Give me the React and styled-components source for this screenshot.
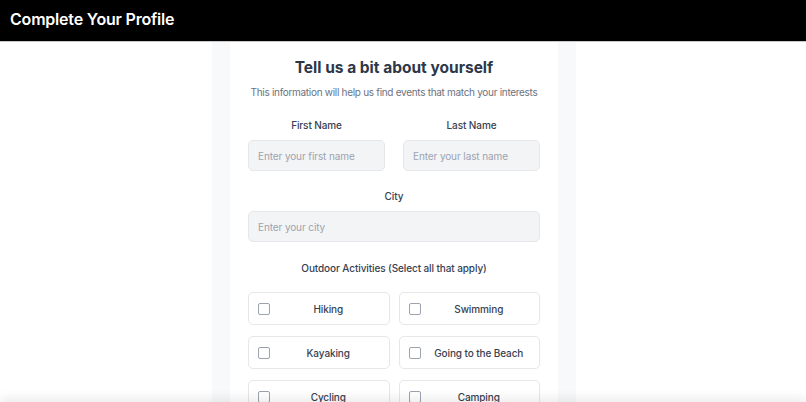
import React from "react";
import styled, { createGlobalStyle } from "styled-components";

const Global = createGlobalStyle`
  * { box-sizing: border-box; }
  html, body { margin: 0; padding: 0; background: #ffffff; }
  body {
    font-family: Inter, "Noto Sans", "Liberation Sans", sans-serif;
    overflow: hidden;
  }
`;

const Header = styled.header`
  height: 42px;
  background: #000000;
  border-bottom: 1px solid #c8c8c8;
  display: flex;
  align-items: center;
  padding: 0 10px;
`;

const HeaderTitle = styled.h1`
  margin: 0 0 3px;
  color: #ffffff;
  font-size: 16px;
  font-weight: 600;
  letter-spacing: -0.2px;
`;

const Main = styled.main`
  display: flex;
  justify-content: center;
  padding-right: 18px;
`;

const Column = styled.div`
  width: 364px;
  background: #f8f9fb;
  padding: 0 18px;
`;

const Card = styled.section`
  background: #ffffff;
  padding: 16px 18px 40px;
  display: flex;
  flex-direction: column;
`;

const Title = styled.h2`
  margin: 0;
  text-align: center;
  font-size: 15.5px;
  font-weight: 700;
  color: #2d3748;
`;

const Subtitle = styled.p`
  margin: 9px 0 0;
  text-align: center;
  font-size: 10px;
  letter-spacing: -0.3px;
  color: #6b7280;
  white-space: nowrap;
`;

const Row = styled.div`
  display: grid;
  grid-template-columns: 1fr 1fr;
  gap: 18px;
  margin-top: ${(p) => p.$top || 0}px;
`;

const Field = styled.div`
  display: flex;
  flex-direction: column;
  margin-top: ${(p) => p.$top || 0}px;
`;

const Label = styled.label`
  text-align: center;
  font-size: 10px;
  font-weight: 500;
  letter-spacing: -0.1px;
  color: #374151;
  margin-bottom: 9px;
`;

const Input = styled.input`
  height: 31px;
  width: 100%;
  border: 1px solid #e5e7eb;
  border-radius: 5px;
  background: #f3f4f6;
  padding: 0 9px;
  font-family: inherit;
  font-size: 10px;
  letter-spacing: -0.1px;
  color: #374151;
  outline: none;
  &::placeholder { color: #9ca3af; }
`;

const SectionLabel = styled.div`
  margin-top: 20px;
  text-align: center;
  font-size: 10px;
  font-weight: 500;
  letter-spacing: -0.1px;
  color: #374151;
`;

const Options = styled.div`
  margin-top: 18px;
  display: grid;
  grid-template-columns: 1fr 1fr;
  column-gap: 9px;
  row-gap: 11px;
`;

const Option = styled.label`
  height: 33px;
  border: 1px solid #e5e7eb;
  border-radius: 5px;
  background: #ffffff;
  display: flex;
  align-items: center;
  padding: 0 10px 0 9px;
  cursor: pointer;
`;

const Box = styled.span`
  width: 12px;
  height: 12px;
  border: 1px solid #9ca3af;
  border-radius: 2px;
  flex-shrink: 0;
`;

const OptionText = styled.span`
  flex: 1;
  margin-left: 8px;
  text-align: center;
  font-size: 10px;
  font-weight: 500;
  letter-spacing: -0.1px;
  color: #374151;
  white-space: nowrap;
`;

const Footer = styled.div`
  position: fixed;
  left: 0;
  right: 0;
  bottom: -40px;
  height: 40px;
  background: #ffffff;
  box-shadow: 0 -4px 10px rgba(0, 0, 0, 0.08);
`;

const activities = [
  "Hiking",
  "Swimming",
  "Kayaking",
  "Going to the Beach",
  "Cycling",
  "Camping",
];

export default () => {
  return (
    <>
      <Global />
      <Header>
        <HeaderTitle>Complete Your Profile</HeaderTitle>
      </Header>
      <Main>
        <Column>
          <Card>
            <Title>Tell us a bit about yourself</Title>
            <Subtitle>
              This information will help us find events that match your interests
            </Subtitle>
            <Row $top={21}>
              <Field>
                <Label>First Name</Label>
                <Input placeholder="Enter your first name" />
              </Field>
              <Field>
                <Label>Last Name</Label>
                <Input placeholder="Enter your last name" />
              </Field>
            </Row>
            <Field $top={19}>
              <Label>City</Label>
              <Input placeholder="Enter your city" />
            </Field>
            <SectionLabel>Outdoor Activities (Select all that apply)</SectionLabel>
            <Options>
              {activities.map((a) => (
                <Option key={a}>
                  <Box />
                  <OptionText>{a}</OptionText>
                </Option>
              ))}
            </Options>
          </Card>
        </Column>
      </Main>
      <Footer />
    </>
  );
};
